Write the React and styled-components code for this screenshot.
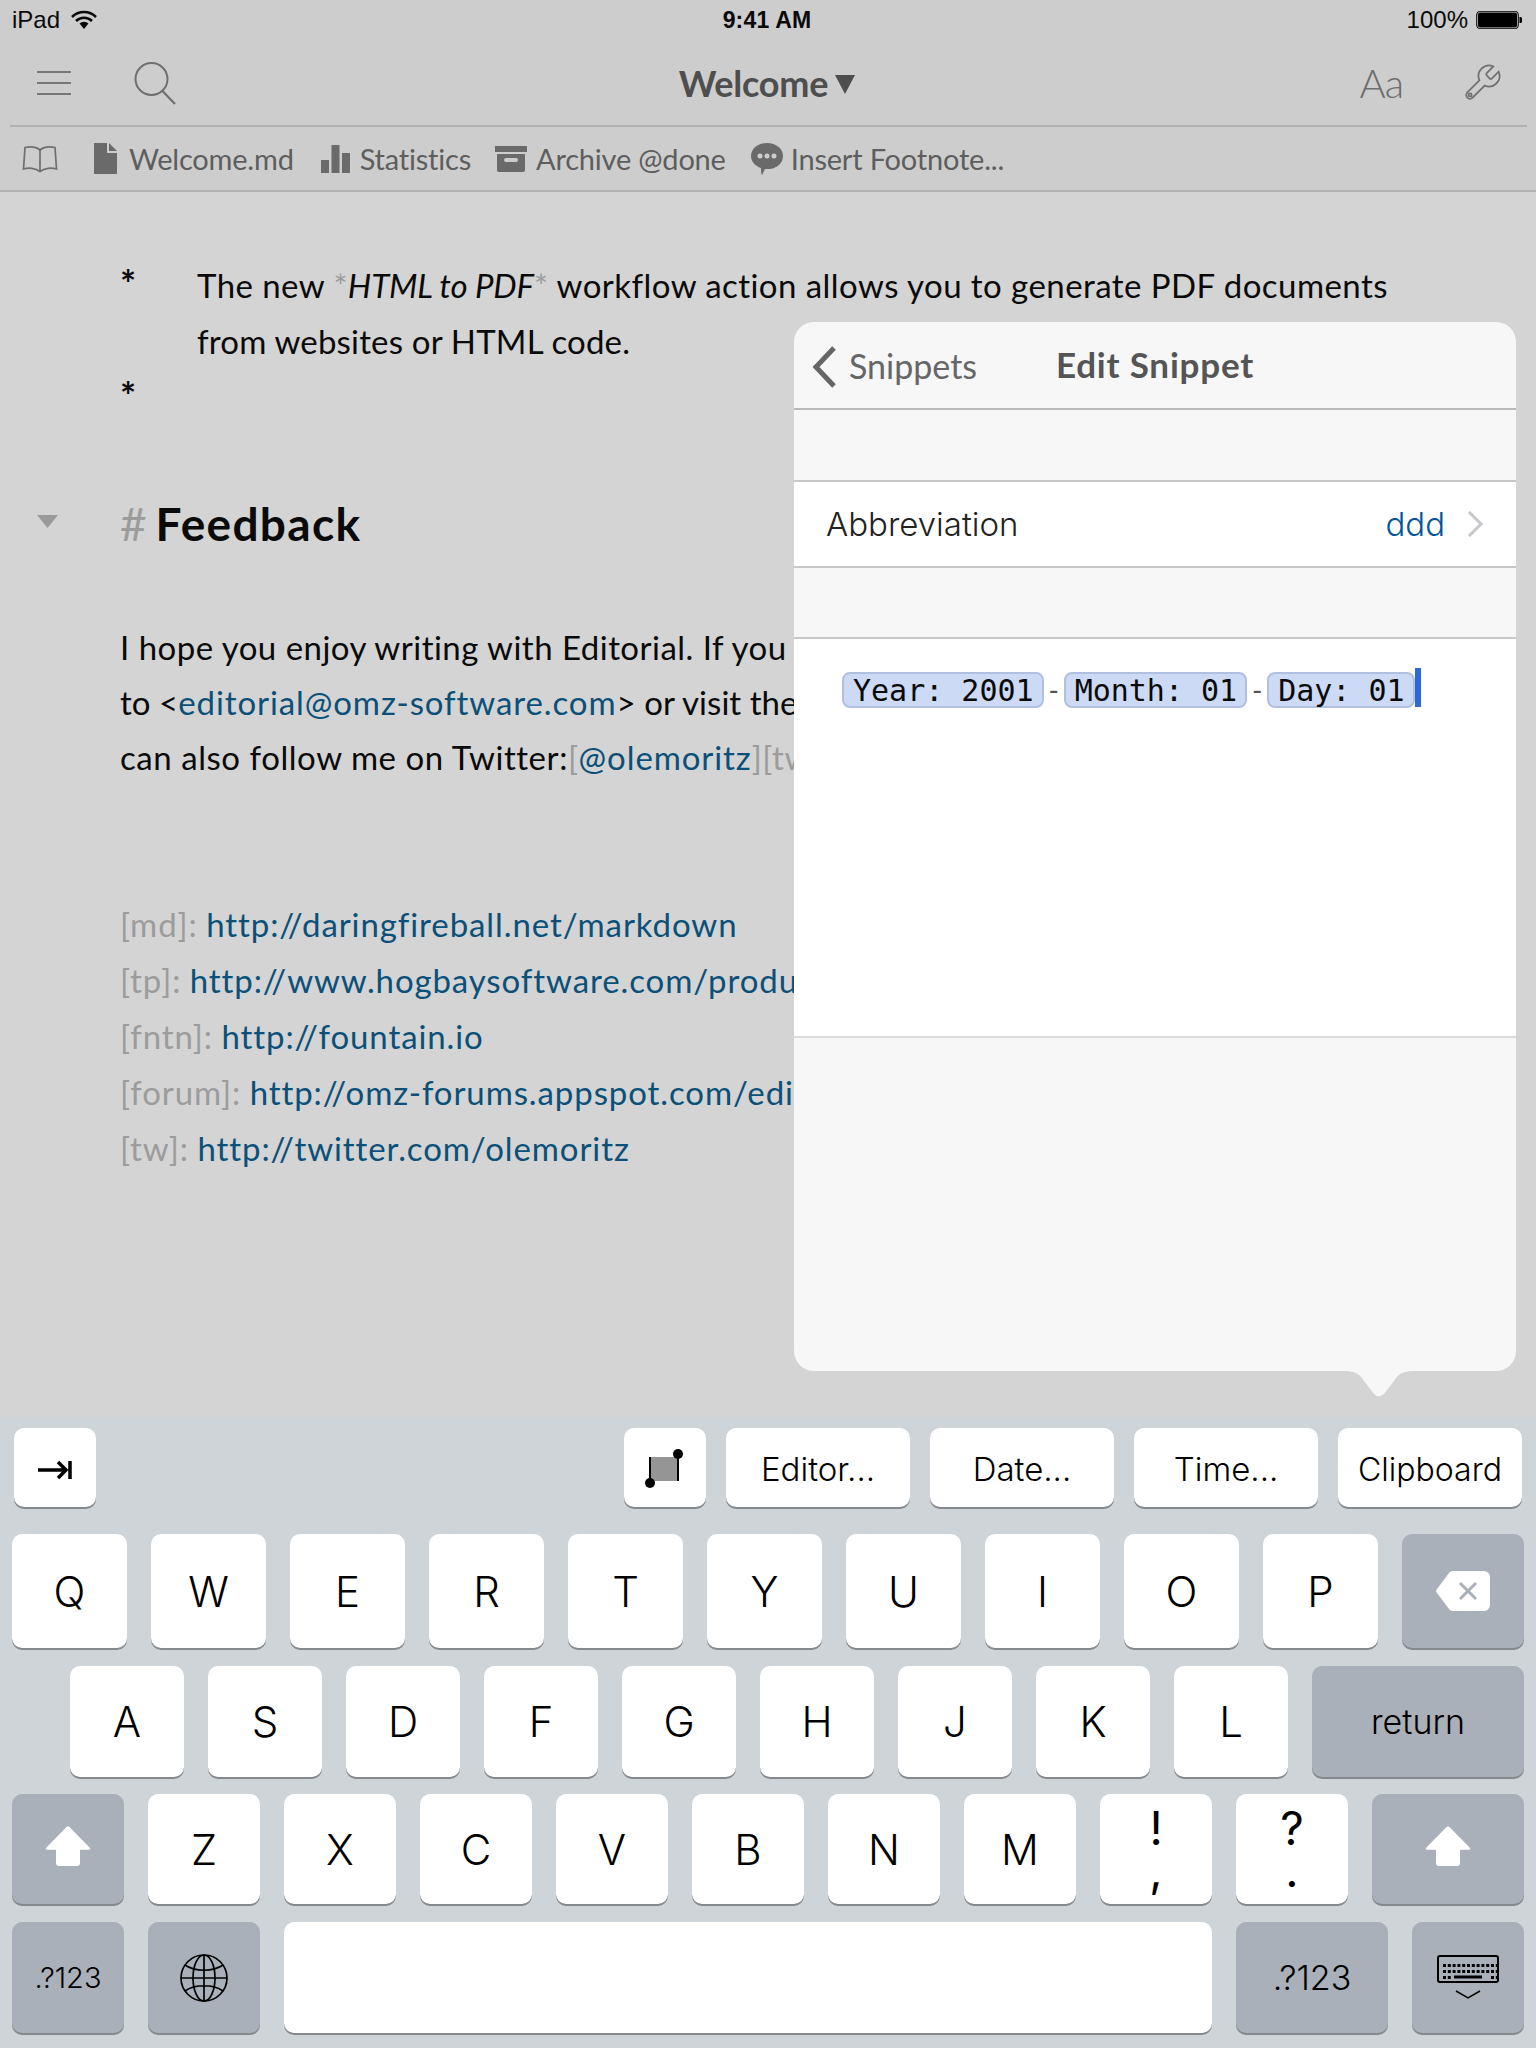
import React from 'react';
import styled, { createGlobalStyle } from 'styled-components';

const GlobalStyle = createGlobalStyle`
  html, body { margin: 0; padding: 0; background: #d4d4d4; }
  * { box-sizing: border-box; }
`;

const Page = styled.div`
  position: relative;
  width: 1536px;
  height: 2048px;
  overflow: hidden;
  display: flex;
  flex-direction: column;
  background: #d4d4d4;
  font-family: "Lato", "Noto Sans", sans-serif;
`;

const Chrome = styled.header`
  background: #cdcdcd;
`;

const StatusBar = styled.div`
  height: 40px;
  padding: 0 14px 0 12px;
  display: grid;
  grid-template-columns: 1fr auto 1fr;
  align-items: center;
  font-family: "Liberation Sans", Arial, sans-serif;
  font-size: 24px;
  color: #0a0a0a;
`;

const StatusLeft = styled.div`
  display: flex;
  align-items: center;
  gap: 11px;
`;

const StatusTime = styled.div`
  font-weight: 700;
  font-size: 23px;
  letter-spacing: 0.2px;
`;

const StatusRight = styled.div`
  display: flex;
  align-items: center;
  justify-content: flex-end;
  gap: 8px;
`;

const NavBar = styled.div`
  height: 87px;
  margin: 0 9px 0 10px;
  padding: 0 24px 0 27px;
  border-bottom: 2px solid #b2b2b2;
  display: grid;
  grid-template-columns: 1fr auto 1fr;
  align-items: center;
`;

const NavGroup = styled.div`
  display: flex;
  align-items: center;
  gap: ${p => p.$gap}px;
  justify-content: ${p => (p.$end ? 'flex-end' : 'flex-start')};
`;

const NavTitle = styled.div`
  display: flex;
  align-items: center;
  gap: 7px;
  margin-right: 6px;
  font-size: 36px;
  font-weight: 700;
  letter-spacing: -0.2px;
  color: #4e4e4e;
  svg { margin-top: 4px; }
`;

const FontButton = styled.div`
  font-family: "Lato", sans-serif;
  font-weight: 300;
  font-size: 40px;
  letter-spacing: -1px;
  color: #6e6e6e;
`;

const ToolBar = styled.div`
  height: 65px;
  padding-left: 22px;
  border-bottom: 2px solid #b2b2b2;
  display: flex;
  align-items: center;
`;

const ToolItem = styled.div`
  display: flex;
  align-items: center;
  gap: ${p => p.$gap || 10}px;
  margin-right: ${p => p.$right || 0}px;
  font-size: 29px;
  letter-spacing: -0.2px;
  color: #5e5e5e;
`;

const Editor = styled.main`
  flex: 1;
  padding: 65px 0 0 120px;
  color: #0a0a0a;
  white-space: nowrap;
`;

const Block = styled.div`
  margin-top: ${p => p.$top || 0}px;
`;

const Line = styled.div`
  position: relative;
  height: ${p => p.$height || 56}px;
  line-height: ${p => p.$height || 56}px;
  font-size: 33px;
  letter-spacing: ${p => p.$track ?? 0.05}px;
  em { letter-spacing: -0.15px; }
`;

const ListMark = styled.span`
  display: inline-block;
  width: 77px;
  line-height: 0;
  font-size: 38px;
  font-weight: 700;
`;

const Heading = styled.div`
  position: relative;
  height: 70px;
  line-height: 70px;
  font-size: 46px;
  font-weight: 700;
  letter-spacing: 1.300px;
  word-spacing: -5px;
`;

const FoldMark = styled.svg`
  position: absolute;
  left: -83px;
  top: 26px;
`;

const Mute = styled.span`
  color: #9c9c9c;
  font-weight: ${p => (p.$light ? 400 : 'inherit')};
`;

const RefLabel = styled(Mute)`
  letter-spacing: 0.9px;
`;

const Link = styled.span`
  color: #0b5078;
  letter-spacing: 0.9px;
`;

const Popover = styled.section`
  position: absolute;
  left: 794px;
  top: 322px;
  width: 722px;
  height: 1049px;
  border-radius: 20px;
  background: #f7f7f7;
  display: flex;
  flex-direction: column;
`;

const PopArrow = styled.svg`
  position: absolute;
  left: 550px;
  bottom: -26px;
`;

const PopNav = styled.div`
  position: relative;
  height: 88px;
  padding-bottom: 2px;
  border-bottom: 2px solid #b9b9b9;
  display: flex;
  align-items: center;
  justify-content: center;
`;

const BackLink = styled.div`
  position: absolute;
  left: 17px;
  top: 20px;
  display: flex;
  align-items: center;
  gap: 12px;
  font-size: 34px;
  color: #666;
  svg { margin-top: 3px; }
`;

const PopTitle = styled.div`
  font-size: 35px;
  font-weight: 700;
  letter-spacing: 0.8px;
  color: #555;
`;

const Spacer = styled.div`
  height: 70px;
`;

const Row = styled.div`
  height: 88px;
  padding: 0 32px;
  background: #fff;
  border-top: 2px solid #c8c8c8;
  border-bottom: 2px solid #c8c8c8;
  display: flex;
  align-items: center;
  justify-content: space-between;
`;

const RowLabel = styled.div`
  font-family: "Inter", "Liberation Sans", sans-serif;
  font-weight: 300;
  font-size: 33px;
  color: #222;
`;

const RowValue = styled.div`
  display: flex;
  align-items: center;
  gap: 22px;
  font-family: "Inter", "Liberation Sans", sans-serif;
  font-weight: 300;
  font-size: 33px;
  color: #00559b;
`;

const SnippetBody = styled.div`
  height: 401px;
  margin-top: -1px;
  padding: 33px 0 0 48px;
  background: #fff;
  border-top: 2px solid #c8c8c8;
  border-bottom: 2px solid #dcdcdc;
  display: flex;
  align-items: flex-start;
`;

const Token = styled.span`
  height: 36px;
  line-height: 33px;
  padding: 0 8px 0 9px;
  border: 2px solid #b1c0e0;
  border-radius: 8px;
  background: #ccdaf5;
  font-family: "DejaVu Sans Mono", "Liberation Mono", monospace;
  font-size: 30px;
  color: #0a0a0a;
`;

const TokenDash = styled.span`
  width: 20px;
  line-height: 36px;
  text-align: center;
  font-size: 28px;
  color: #555;
`;

const Caret = styled.span`
  width: 6px;
  height: 39px;
  margin-top: -4px;
  background: #2d68d8;
`;

const Keyboard = styled.div`
  height: 631px;
  padding: 11px 12px 0;
  background: #cfd4d8;
  display: flex;
  flex-direction: column;
`;

const KeyRow = styled.div`
  display: flex;
  gap: ${p => p.$gap || 24}px;
  height: ${p => p.$height}px;
  margin-top: ${p => p.$top}px;
  padding-left: ${p => p.$left || 0}px;
  padding-right: ${p => p.$right || 0}px;
`;

const Key = styled.div`
  width: ${p => p.$width}px;
  flex: none;
  margin-left: ${p => (p.$push ? 'auto' : '0')};
  padding-top: ${p => p.$drop || 0}px;
  padding-bottom: ${p => p.$lift || 0}px;
  border-radius: 10px;
  background: ${p => (p.$dark ? '#a9b0b9' : '#fff')};
  box-shadow: 0 2px 0 #85888c;
  display: flex;
  align-items: center;
  justify-content: center;
  font-family: "Inter", "Liberation Sans", sans-serif;
  font-weight: 300;
  font-size: ${p => p.$size || 42}px;
  color: #000;
`;

const PunctKey = styled(Key)`
  white-space: pre;
  text-align: center;
  line-height: 42px;
  font-size: 46px;
  font-weight: 400;
`;

const WifiIcon = () => (
  <svg width="26" height="20" viewBox="0 0 26 20">
    <path d="M1 7a17 17 0 0 1 24 0M5 11a11.500 11.500 0 0 1 16 0" fill="none" stroke="#0a0a0a" strokeWidth="2.600" />
    <path d="M8.500 13.500a6.500 6.500 0 0 1 9 0L13 19z" fill="#0a0a0a" />
  </svg>
);

const BatteryIcon = () => (
  <svg width="46" height="20" viewBox="0 0 46 20">
    <rect x="0.750" y="1.500" width="41.500" height="17" rx="3" fill="#000" stroke="#000" strokeWidth="1" />
    <rect x="1.500" y="2.200" width="40" height="15.600" rx="2.500" fill="none" stroke="#cdcdcd" strokeWidth="0.800" />
    <path d="M43.500 7h1a1.500 1.500 0 0 1 1.500 1.500v3a1.500 1.500 0 0 1-1.500 1.500h-1z" fill="#000" />
  </svg>
);

const MenuIcon = () => (
  <svg width="34" height="26" viewBox="0 0 34 26">
    <path d="M0 2h34M0 13h34M0 24h34" stroke="#777" strokeWidth="2" />
  </svg>
);

const SearchIcon = () => (
  <svg width="44" height="44" viewBox="0 0 44 44">
    <circle cx="18.500" cy="18" r="16" fill="none" stroke="#6f6f6f" strokeWidth="2" />
    <path d="M29.500 30L42 43" stroke="#6f6f6f" strokeWidth="2.200" />
  </svg>
);

const WrenchIcon = () => (
  <svg width="42" height="42" viewBox="0 0 24 24" fill="none" stroke="#707070" strokeWidth="1">
    <path d="M14.700 6.300a1 1 0 0 0 0 1.400l1.600 1.600a1 1 0 0 0 1.400 0l3.770-3.770a6 6 0 0 1-7.940 7.940l-6.910 6.910a2.120 2.120 0 0 1-3-3l6.910-6.910a6 6 0 0 1 7.940-7.940l-3.760 3.760z" />
    <circle cx="5.200" cy="18.800" r="0.900" />
  </svg>
);

const BookIcon = () => (
  <svg width="36" height="28" viewBox="0 0 36 28" fill="none" stroke="#6f6f6f" strokeWidth="1.700">
    <path d="M18 5C14 1.500 8 1.500 3 2.500L1.500 24c5-1.500 12-1 16.500 2.500C22.500 23 29.500 22.500 34.500 24L33 2.500C28 1.500 22 1.500 18 5z" />
    <path d="M18 5v21" />
  </svg>
);

const DocIcon = () => (
  <svg width="23" height="31" viewBox="0 0 23 31">
    <path d="M0 0h13v10h10v21H0zM15 0l8 8h-8z" fill="#6a6a6a" />
  </svg>
);

const BarsIcon = () => (
  <svg width="29" height="28" viewBox="0 0 29 28">
    <path d="M0 15h8v13H0zM10.500 0h8v28h-8zM21 8h8v20h-8z" fill="#6a6a6a" />
  </svg>
);

const ArchiveIcon = () => (
  <svg width="32" height="26" viewBox="0 0 32 26">
    <path d="M0 0h32v6H0z" fill="#6a6a6a" />
    <path fillRule="evenodd" d="M2 8h28v16a2 2 0 0 1-2 2H4a2 2 0 0 1-2-2zM11 12a1.500 1.500 0 0 0 0 4h10a1.500 1.500 0 0 0 0-4z" fill="#6a6a6a" />
  </svg>
);

const BubbleIcon = () => (
  <svg width="32" height="32" viewBox="0 0 32 32">
    <path fillRule="evenodd" d="M16 0c9 0 16 5.500 16 13s-7 13-14 13c-2 0-3 0-4 0l-3 6c-1-2-1-4-1-7C4 23 0 18.500 0 13 0 5.500 7 0 16 0zM9 10.500a2.500 2.500 0 1 0 0 5 2.500 2.500 0 0 0 0-5zM16 10.500a2.500 2.500 0 1 0 0 5 2.500 2.500 0 0 0 0-5zM23 10.500a2.500 2.500 0 1 0 0 5 2.500 2.500 0 0 0 0-5z" fill="#6a6a6a" />
  </svg>
);

const TitleCaret = () => (
  <svg width="20" height="19" viewBox="0 0 20 19">
    <path d="M0 0h20L10 19z" fill="#4e4e4e" />
  </svg>
);

const BackChevron = () => (
  <svg width="26" height="44" viewBox="0 0 26 44">
    <path d="M23 3L5 22l18 19" fill="none" stroke="#666" strokeWidth="5" />
  </svg>
);

const RowChevron = () => (
  <svg width="17" height="28" viewBox="0 0 17 28">
    <path d="M2 2l12 12L2 26" fill="none" stroke="#c7c7cc" strokeWidth="3" />
  </svg>
);

const TabIcon = () => (
  <svg width="34" height="20" viewBox="0 0 34 20" fill="none" stroke="#000" strokeWidth="3.500">
    <path d="M0 10h28M20 2l8 8-8 8M32 1v18" />
  </svg>
);

const SelectionIcon = () => (
  <svg width="40" height="40" viewBox="0 0 40 40">
    <rect x="6" y="8" width="26" height="24" fill="#959595" />
    <path d="M5 8v26M33 6v26" stroke="#000" strokeWidth="2" />
    <circle cx="5" cy="34" r="5" fill="#000" />
    <circle cx="33" cy="5" r="5" fill="#000" />
  </svg>
);

const DeleteIcon = () => (
  <svg width="54" height="40" viewBox="0 0 54 40">
    <path d="M17 0h31a6 6 0 0 1 6 6v28a6 6 0 0 1-6 6H17a5 5 0 0 1-4-2L1 22a3 3 0 0 1 0-4L13 2a5 5 0 0 1 4-2z" fill="#fff" />
    <path d="M24 12l16 16M40 12L24 28" stroke="#a9b0b9" strokeWidth="3" />
  </svg>
);

const ShiftIcon = () => (
  <svg width="46" height="40" viewBox="0 0 46 40">
    <path d="M21.500 1a2 2 0 0 1 3 0L45 22a1 1 0 0 1-.7 1.700H35V37a3 3 0 0 1-3 3H14a3 3 0 0 1-3-3V23.700H1.700A1 1 0 0 1 1 22z" fill="#fff" />
  </svg>
);

const GlobeIcon = () => (
  <svg width="50" height="50" viewBox="0 0 50 50" fill="none" stroke="#000" strokeWidth="1.700">
    <circle cx="25" cy="25" r="23" />
    <ellipse cx="25" cy="25" rx="11" ry="23" />
    <path d="M25 2v46M2 25h46M6 12c10 7 28 7 38 0M6 38c10-7 28-7 38 0" />
  </svg>
);

const KeyboardDots = () => {
  const dots = [];
  [9, 15, 21].forEach((y, r) => {
    for (let i = 0; i < 12; i++) {
      if (r === 2 && i > 1 && i < 10) continue;
      dots.push(<rect key={`${r}-${i}`} x={6 + i * 4.800} y={y} width="3" height="3" fill="#000" />);
    }
  });
  return (
    <svg width="62" height="46" viewBox="0 0 62 46">
      <rect x="1" y="1" width="60" height="26" rx="2" fill="none" stroke="#000" strokeWidth="2" />
      {dots}
      <path d="M17 20.500h28v3H17z" fill="#000" />
      <path d="M19 36l12 7 12-7" fill="none" stroke="#000" strokeWidth="1.500" />
    </svg>
  );
};

const rowOne = ['Q', 'W', 'E', 'R', 'T', 'Y', 'U', 'I', 'O', 'P'];
const rowTwo = ['A', 'S', 'D', 'F', 'G', 'H', 'J', 'K', 'L'];
const rowThree = ['Z', 'X', 'C', 'V', 'B', 'N', 'M'];

// the long urls run on behind the popover, as they do in the app
const references = [
  ['[md]:', 'http://daringfireball.net/markdown'],
  ['[tp]:', 'http://www.hogbaysoftware.com/produ'],
  ['[fntn]:', 'http://fountain.io'],
  ['[forum]:', 'http://omz-forums.appspot.com/edi'],
  ['[tw]:', 'http://twitter.com/olemoritz'],
];

export default function App() {
  return (
    <Page>
      <GlobalStyle />
      <Chrome>
        <StatusBar>
          <StatusLeft>iPad <WifiIcon /></StatusLeft>
          <StatusTime>9:41 AM</StatusTime>
          <StatusRight>100% <BatteryIcon /></StatusRight>
        </StatusBar>
        <NavBar>
          <NavGroup $gap={62}>
            <MenuIcon />
            <SearchIcon />
          </NavGroup>
          <NavTitle>Welcome <TitleCaret /></NavTitle>
          <NavGroup $gap={58} $end>
            <FontButton>Aa</FontButton>
            <WrenchIcon />
          </NavGroup>
        </NavBar>
        <ToolBar>
          <ToolItem $right={36}><BookIcon /></ToolItem>
          <ToolItem $right={27} $gap={12}><DocIcon />Welcome.md</ToolItem>
          <ToolItem $right={24}><BarsIcon />Statistics</ToolItem>
          <ToolItem $right={25} $gap={9}><ArchiveIcon />Archive @done</ToolItem>
          <ToolItem $gap={8}><BubbleIcon />Insert Footnote...</ToolItem>
        </ToolBar>
      </Chrome>

      <Editor>
        <Block>
          <Line $track={0.44}>
            <ListMark>*</ListMark>The new <Mute>*</Mute><em>HTML to PDF</em><Mute>*</Mute> workflow action allows you to generate PDF documents
          </Line>
          <Line $track={0.18}><ListMark />from websites or HTML code.</Line>
          <Line><ListMark>*</ListMark></Line>
        </Block>
        <Block $top={64}>
          <Heading>
            <FoldMark width="21" height="13" viewBox="0 0 21 13">
              <path d="M0 0h21L10.500 13z" fill="#9a9a9a" />
            </FoldMark>
            <Mute $light>#</Mute> Feedback
          </Heading>
        </Block>
        <Block $top={61}>
          <Line $height={55} $track={0.47}>I hope you enjoy writing with Editorial. If you</Line>
          <Line $height={55}>to &lt;<Link>editorial@omz-software.com</Link>&gt; or visit the</Line>
          <Line $height={55} $track={0.55}>can also follow me on Twitter:<Mute>[</Mute><Link>@olemoritz</Link><Mute>][tw]</Mute></Line>
        </Block>
        <Block $top={111}>
          {references.map(([label, url]) => (
            <Line key={label}><RefLabel>{label}</RefLabel> <Link>{url}</Link></Line>
          ))}
        </Block>
      </Editor>

      <Popover>
        <PopNav>
          <BackLink><BackChevron />Snippets</BackLink>
          <PopTitle>Edit Snippet</PopTitle>
        </PopNav>
        <Spacer />
        <Row>
          <RowLabel>Abbreviation</RowLabel>
          <RowValue>ddd <RowChevron /></RowValue>
        </Row>
        <Spacer />
        <SnippetBody>
          <Token>Year: 2001</Token>
          <TokenDash>-</TokenDash>
          <Token>Month: 01</Token>
          <TokenDash>-</TokenDash>
          <Token>Day: 01</Token>
          <Caret />
        </SnippetBody>
        <PopArrow width="70" height="27" viewBox="0 0 70 27">
          <path d="M0 1c10 0 15 2 20 10l10 13c3 3 7 3 10 0l10-13C55 3 60 1 70 1z" fill="#f7f7f7" />
        </PopArrow>
      </Popover>

      <Keyboard>
        <KeyRow $height={79} $top={0} $gap={20} $left={2} $right={2}>
          <Key $width={82} $drop={4}><TabIcon /></Key>
          <Key $width={82} $push $drop={2}><SelectionIcon /></Key>
          <Key $width={184} $size={33} $drop={3}>Editor...</Key>
          <Key $width={184} $size={33} $drop={3}>Date...</Key>
          <Key $width={184} $size={33} $drop={3}>Time...</Key>
          <Key $width={184} $size={32} $drop={3}>Clipboard</Key>
        </KeyRow>
        <KeyRow $height={114} $top={27}>
          {rowOne.map(k => <Key key={k} $width={115}>{k}</Key>)}
          <Key $width={122} $dark><DeleteIcon /></Key>
        </KeyRow>
        <KeyRow $height={111} $top={18} $left={58}>
          {rowTwo.map(k => <Key key={k} $width={114}>{k}</Key>)}
          <Key $width={212} $dark $size={34}>return</Key>
        </KeyRow>
        <KeyRow $height={110} $top={17}>
          <Key $width={112} $dark $lift={6}><ShiftIcon /></Key>
          {rowThree.map(k => <Key key={k} $width={112}>{k}</Key>)}
          <PunctKey $width={112}>{'!\n,'}</PunctKey>
          <PunctKey $width={112}>{'?\n.'}</PunctKey>
          <Key $width={152} $dark $lift={6}><ShiftIcon /></Key>
        </KeyRow>
        <KeyRow $height={111} $top={18}>
          <Key $width={112} $dark $size={29}>.?123</Key>
          <Key $width={112} $dark><GlobeIcon /></Key>
          <Key $width={928} />
          <Key $width={152} $dark $size={34}>.?123</Key>
          <Key $width={112} $dark><KeyboardDots /></Key>
        </KeyRow>
      </Keyboard>
    </Page>
  );
}
